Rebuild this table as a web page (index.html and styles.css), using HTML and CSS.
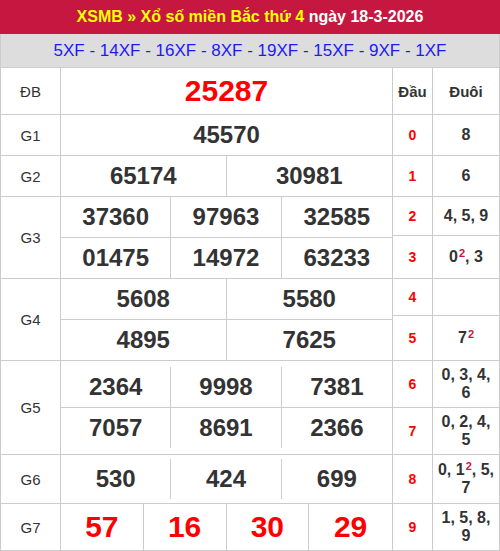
FILE: index.html
```html
<!DOCTYPE html>
<html lang="vi">
<head>
<meta charset="utf-8">
<title>XSMB</title>
<link rel="stylesheet" href="styles.css">
</head>
<body>
<div class="page">
  <div class="title"><span class="hl">XSMB » Xổ số miền Bắc thứ 4</span> ngày 18-3-2026</div>
  <div class="codes">5XF - 14XF - 16XF - 8XF - 19XF - 15XF - 9XF - 1XF</div>
  <div class="board">
    <div class="prizes">
      <div class="label">ĐB</div>
      <div class="nums">
        <div class="sub h46 c1"><div class="n big red">25287</div></div>
      </div>

      <div class="label">G1</div>
      <div class="nums">
        <div class="sub c1"><div class="n">45570</div></div>
      </div>

      <div class="label">G2</div>
      <div class="nums">
        <div class="sub c2"><div class="n">65174</div><div class="n">30981</div></div>
      </div>

      <div class="label">G3</div>
      <div class="nums">
        <div class="sub c3"><div class="n">37360</div><div class="n">97963</div><div class="n">32585</div></div>
        <div class="sub c3"><div class="n">01475</div><div class="n">14972</div><div class="n">63233</div></div>
      </div>

      <div class="label">G4</div>
      <div class="nums">
        <div class="sub c2"><div class="n">5608</div><div class="n">5580</div></div>
        <div class="sub c2"><div class="n">4895</div><div class="n">7625</div></div>
      </div>

      <div class="label">G5</div>
      <div class="nums inset5">
        <div class="sub c3"><div class="n">2364</div><div class="n">9998</div><div class="n">7381</div></div>
        <div class="sub c3"><div class="n">7057</div><div class="n">8691</div><div class="n">2366</div></div>
      </div>

      <div class="label">G6</div>
      <div class="nums inset6">
        <div class="sub c3"><div class="n">530</div><div class="n">424</div><div class="n">699</div></div>
      </div>

      <div class="label">G7</div>
      <div class="nums">
        <div class="sub h46 c4"><div class="n big red">57</div><div class="n big red">16</div><div class="n big red">30</div><div class="n big red">29</div></div>
      </div>
    </div>

    <div class="loto">
      <div class="cell head">Đầu</div><div class="cell head">Đuôi</div>
      <div class="cell dau">0</div><div class="cell duoi"><span>8</span></div>
      <div class="cell dau">1</div><div class="cell duoi"><span>6</span></div>
      <div class="cell dau">2</div><div class="cell duoi"><span>4, 5, 9</span></div>
      <div class="cell dau">3</div><div class="cell duoi"><span>0<sup>2</sup>, 3</span></div>
      <div class="cell dau">4</div><div class="cell duoi"></div>
      <div class="cell dau">5</div><div class="cell duoi"><span>7<sup>2</sup></span></div>
      <div class="cell dau">6</div><div class="cell duoi"><span>0, 3, 4, 6</span></div>
      <div class="cell dau">7</div><div class="cell duoi"><span>0, 2, 4, 5</span></div>
      <div class="cell dau">8</div><div class="cell duoi"><span>0, 1<sup>2</sup>, 5, 7</span></div>
      <div class="cell dau">9</div><div class="cell duoi"><span>1, 5, 8, 9</span></div>
    </div>
  </div>
</div>
</body>
</html>
```

FILE: styles.css
```css
* { box-sizing: border-box; }

body {
  margin: 0;
  font-family: "Liberation Sans", Arial, sans-serif;
  color: #333;
  background: #fff;
}

.page { width: 500px; }

.title {
  height: 34px;
  background: #c5173f;
  color: #fff;
  font-weight: bold;
  font-size: 16px;
  line-height: 33px;
  text-align: center;
}
.title .hl { color: #ffff00; }

.codes {
  height: 33px;
  background: #dddddd;
  border-left: 1px solid #cccccc;
  border-right: 1px solid #cccccc;
  color: #1b1bf6;
  font-size: 17px;
  line-height: 33px;
  text-align: center;
}

.board {
  display: flex;
  width: 500px;
  border-top: 1px solid #cccccc;
  border-left: 1px solid #cccccc;
}

.prizes {
  display: grid;
  grid-template-columns: 60px 332px;
}

.label {
  display: flex;
  align-items: center;
  justify-content: center;
  border-right: 1px solid #cccccc;
  border-bottom: 1px solid #cccccc;
  font-size: 15px;
  color: #333;
}

.nums {
  display: flex;
  flex-direction: column;
  border-right: 1px solid #cccccc;
  border-bottom: 1px solid #cccccc;
}

.sub {
  box-sizing: content-box;
  height: 40px;
  display: grid;
}
.sub + .sub { border-top: 1px solid #cccccc; }
.sub.h46 { height: 46px; }
.c1 { grid-template-columns: 1fr; }
.c2 { grid-template-columns: 1fr 1fr; }
.c3 { grid-template-columns: 1fr 1fr 1fr; }
.c4 { grid-template-columns: 1fr 1fr 1fr 1fr; }

.inset5 .sub:first-child { padding-top: 6px; }
.inset5 .sub:last-child { padding-bottom: 6px; }
.inset6 .sub { padding: 4px 0; }

.n {
  display: flex;
  align-items: center;
  justify-content: center;
  font-size: 24px;
  font-weight: bold;
  color: #333;
  border-right: 1px solid #cccccc;
}
.n:last-child { border-right: none; }
.n.big { font-size: 30px; }
.n.red { color: #ff0000; }

.loto {
  display: grid;
  grid-template-columns: 40px 67px;
  grid-template-rows: 47px 41px 41px 39px 43px 37px 45px 47px 47px 49px 47px;
}

.cell {
  display: flex;
  align-items: center;
  justify-content: center;
  text-align: center;
  border-right: 1px solid #cccccc;
  border-bottom: 1px solid #cccccc;
  font-weight: bold;
}
.cell.head { font-size: 15px; color: #333; }
.cell.dau { font-size: 14px; color: #ff0000; }
.cell.duoi { font-size: 16px; color: #333; padding: 0 4px; line-height: 18px; }

sup {
  font-size: 11px;
  color: #c5173f;
  line-height: 0;
  vertical-align: 5px;
  margin-left: 1px;
}
```
